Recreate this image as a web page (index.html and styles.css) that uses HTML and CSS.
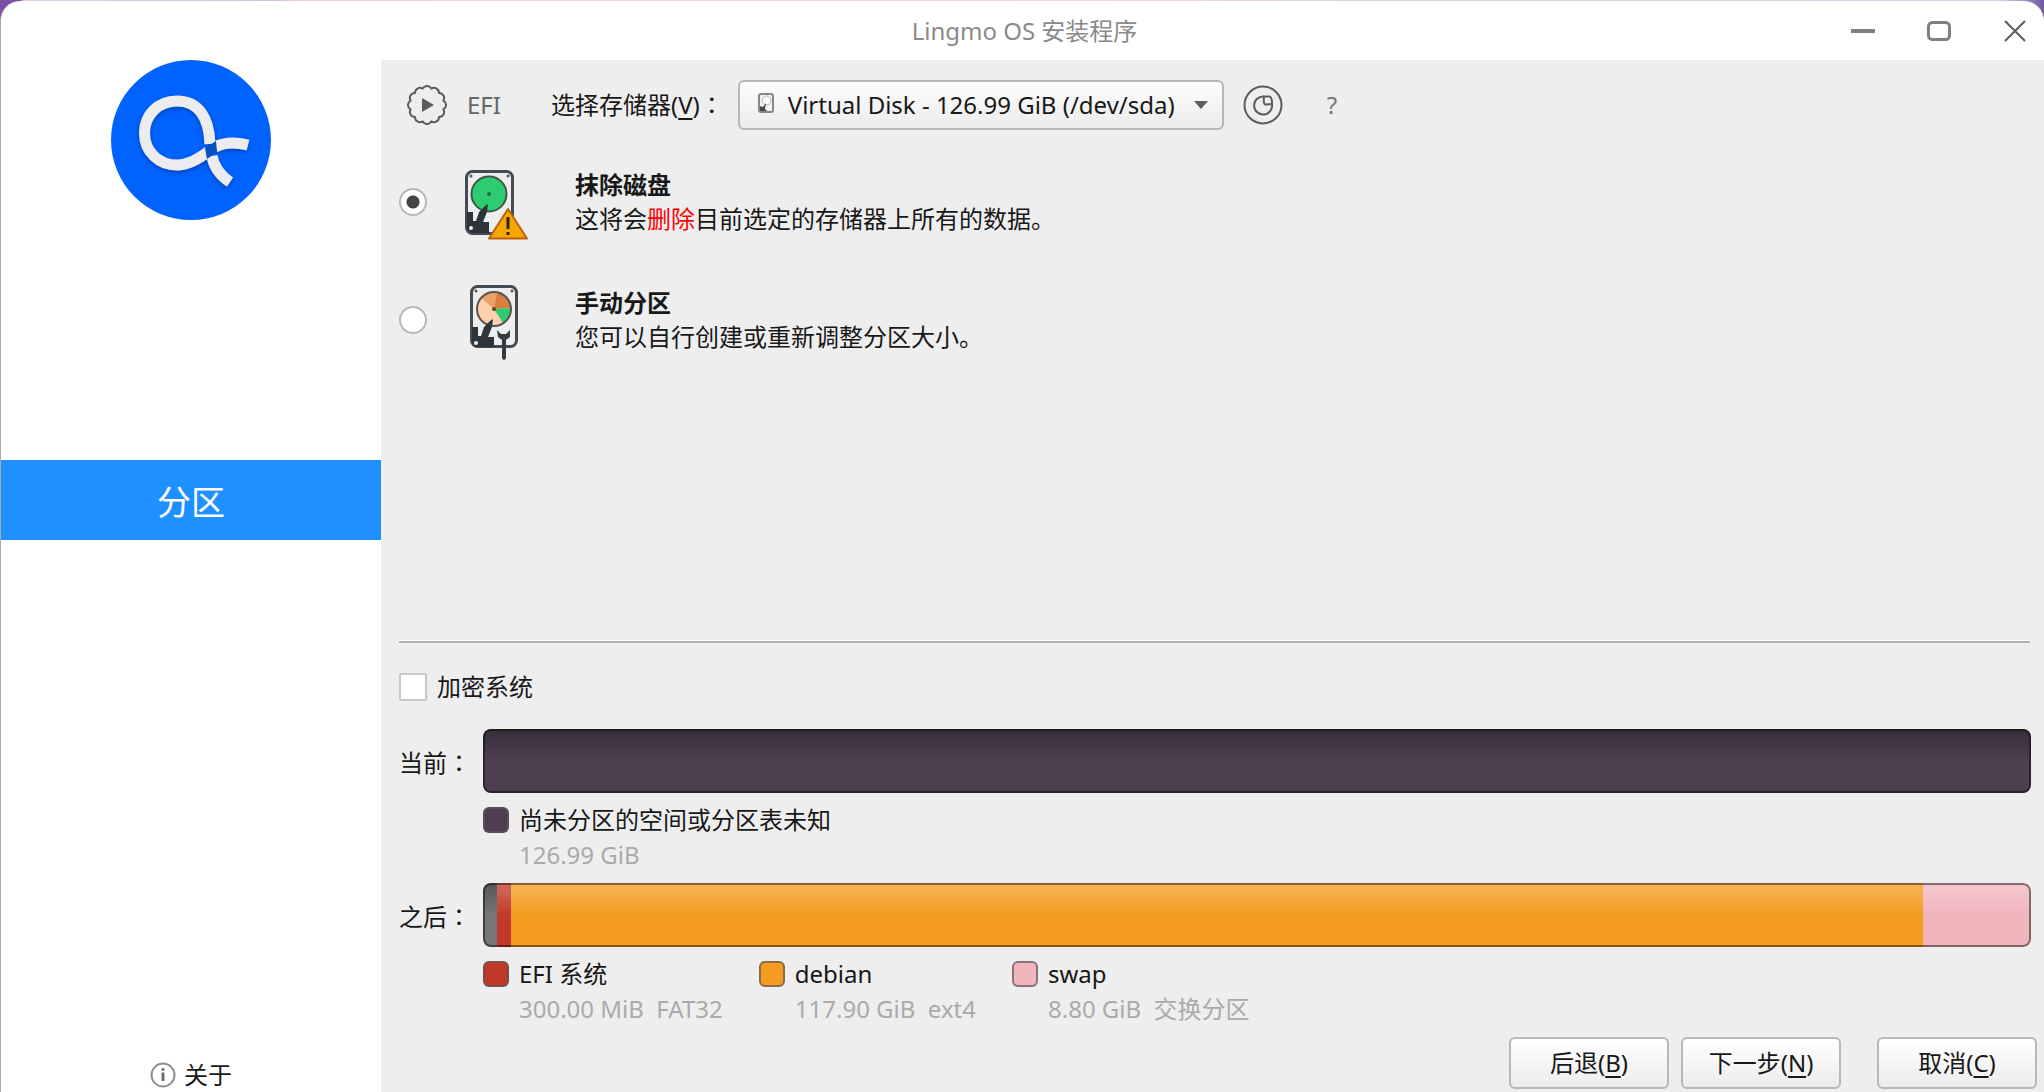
FILE: index.html
```html
<!DOCTYPE html>
<html lang="zh-CN">
<head>
<meta charset="utf-8">
<meta name="viewport" content="width=device-width, initial-scale=1">
<title>Lingmo OS 安装程序</title>
<link rel="stylesheet" href="styles.css">
</head>
<body>
<div class="window">
  <header class="titlebar">
    <h1 class="title">Lingmo OS 安装程序</h1>
    <div class="window-controls">
      <button class="window-button" type="button" aria-label="最小化"><svg width="24" height="24" viewBox="0 0 24 24"><path d="M0 12H24" fill="none" stroke="#808080" stroke-width="4"/></svg></button>
      <button class="window-button" type="button" aria-label="最大化"><svg width="24" height="24" viewBox="0 0 24 24"><rect x="1.500" y="3.500" width="21" height="17" rx="4" fill="none" stroke="#808080" stroke-width="3"/></svg></button>
      <button class="window-button" type="button" aria-label="关闭"><svg width="24" height="24" viewBox="0 0 24 24"><path d="M2 2L22 22M22 2L2 22" fill="none" stroke="#5c5c5c" stroke-width="2"/></svg></button>
    </div>
  </header>
  <div class="body">
    <aside class="sidebar">
      <svg class="logo" viewBox="0 0 160 160" role="img" aria-label="Lingmo OS">
        <defs>
          <filter id="soft" x="-20%" y="-20%" width="140%" height="140%"><feDropShadow dx="0" dy="2" stdDeviation="2" flood-color="#002a80" flood-opacity=".6"/></filter>
        </defs>
        <circle cx="80" cy="80" r="80" fill="#0062ff"/>
        <g fill="none" stroke="#ececee" stroke-width="11" filter="url(#soft)">
          <path d="M99 84C98 58 88 41 66 41C47 41 33.500 55 33.500 73C33.500 92 48 105 66 105C78 105 86 99 97 92"/>
          <path d="M104 87C114 82 125 82 137 85"/>
          <path d="M101 96C103 108 110 116 119 122"/>
        </g>
        <path d="M94 88L105 81L106 92L96 99Z" fill="#0a4fc4"/>
      </svg>
      <div class="step">分区</div>
      <button class="about" type="button">
        <svg width="26" height="26" viewBox="0 0 26 26"><circle cx="13" cy="13" r="11.500" fill="none" stroke="#909090" stroke-width="2"/><path d="M13 10.500V19" stroke="#707070" stroke-width="3"/><circle cx="13" cy="7.500" r="1.700" fill="#808080"/></svg>
        关于
      </button>
    </aside>
    <main class="content">
      <div class="toolbar">
        <svg width="40" height="40" viewBox="0 0 40 40"><path fill="none" stroke="#5c5c5c" stroke-width="2" stroke-linejoin="round" d="M36.400 15.600A5 5 0 0 1 36.400 24.400A5 5 0 0 1 32 32A5 5 0 0 1 24.400 36.400A5 5 0 0 1 15.600 36.400A5 5 0 0 1 8 32A5 5 0 0 1 3.600 24.400A5 5 0 0 1 3.600 15.600A5 5 0 0 1 8 8A5 5 0 0 1 15.600 3.600A5 5 0 0 1 24.400 3.600A5 5 0 0 1 32 8A5 5 0 0 1 36.400 15.600Z"/><path d="M15 13L27 20L15 27Z" fill="#5c5c5c"/></svg>
        <span class="firmware">EFI</span>
        <label class="device-label" for="device">选择存储器(<u>V</u>)<span lang="ja">：</span></label>
        <div class="device">
          <select id="device" class="device-select"><option>Virtual Disk - 126.99 GiB (/dev/sda)</option></select>
          <svg class="device-icon" width="16" height="20" viewBox="0 0 16 20"><rect x="1" y="1" width="14" height="18" rx="2" fill="#f4f4f4" stroke="#88888c" stroke-width="2"/><circle cx="8.500" cy="7.500" r="4.500" fill="#fafafa" stroke="#b0b0b4"/><path d="M2 13L5 14L8 10L7 16L9 18H2Z" fill="#4a4a50"/></svg>
          <svg class="device-arrow" width="14" height="8" viewBox="0 0 14 8"><path d="M0 0H14L7 8Z" fill="#5c5c5c"/></svg>
        </div>
        <button class="icon-button" type="button" aria-label="分区工具"><svg width="40" height="40" viewBox="0 0 40 40"><g fill="none" stroke="#5c5c5c" stroke-width="2"><circle cx="20" cy="20" r="18.500"/><path d="M21 11.500A9 9 0 1 0 29 19"/><path d="M21 11.500Q20 20 23 19.500T29 19Q29 12 26.500 11.500Z"/></g></svg></button>
        <button class="help" type="button">?</button>
      </div>

      <div class="choices">
        <div class="choice">
          <input class="radio" type="radio" name="mode" id="erase" checked>
          <svg class="disk" width="80" height="80" viewBox="0 0 80 80"><rect x="9.500" y="9.500" width="46" height="62" rx="6" fill="#eeeeef" stroke="#454b52" stroke-width="3"/><g fill="#50565c"><circle cx="14" cy="14" r="1.500"/><circle cx="51" cy="14" r="1.500"/></g><circle cx="32" cy="32" r="17.500" fill="#2ecc71" stroke="#42564c" stroke-width="2"/><circle cx="32" cy="32" r="2" fill="#256b43"/><path d="M10 50H16V59H19L22 50L28 44L31 42L30 50L26 60H32V64H32V71H14L10 67Z" fill="#2d353b"/><circle cx="14" cy="66" r="2" fill="#eee"/><path d="M51 47L70 76.500H32Z" fill="#f5a800" stroke="#c06010" stroke-width="2" stroke-linejoin="round"/><path d="M51 55V67M51 70V73" stroke="#302408" stroke-width="3"/></svg>
          <label class="choice-text" for="erase"><strong>抹除磁盘</strong><span>这将会<em>删除</em>目前选定的存储器上所有的数据。</span></label>
        </div>
        <div class="choice">
          <input class="radio" type="radio" name="mode" id="manual">
          <svg class="disk" width="80" height="80" viewBox="0 0 80 80"><rect x="14.500" y="6.500" width="45" height="60" rx="6" fill="#eeeeef" stroke="#454b52" stroke-width="3"/><g fill="#50565c"><circle cx="19" cy="11" r="1.500"/><circle cx="55" cy="11" r="1.500"/></g><circle cx="37" cy="29" r="17" fill="#ffd0ae"/><path d="M37 29L24 18A17 17 0 0 1 40 12Z" fill="#e8a26a"/><path d="M37 29L40 12A17 17 0 0 1 54 28Z" fill="#d97f3e"/><path d="M37 29L54 28A17 17 0 0 1 46 43Z" fill="#2ecc71"/><circle cx="37" cy="29" r="17" fill="none" stroke="#5b5450" stroke-width="2"/><circle cx="37" cy="29" r="2" fill="#604030"/><path d="M15 47H21V56H24L27 47L33 41L36 39L35 47L31 57H37V67H19L15 63Z" fill="#2d353b"/><circle cx="19" cy="63" r="2" fill="#eee"/><path d="M40 50L41 57L45 60V78Q47 82 49 78V60L53 57V50L49 54H44Z" fill="#343c42"/></svg>
          <label class="choice-text" for="manual"><strong>手动分区</strong><span>您可以自行创建或重新调整分区大小。</span></label>
        </div>
      </div>

      <hr class="divider">

      <div class="encrypt">
        <input class="checkbox" type="checkbox" id="encrypt">
        <label for="encrypt">加密系统</label>
      </div>

      <div class="layouts">
        <div class="caption">当前<span lang="ja">：</span></div>
        <div class="bar"><div class="part unknown" style="width:100%"></div></div>
        <div class="legend">
          <div class="entry"><i class="swatch unknown"></i><span>尚未分区的空间或分区表未知</span><small>126.99 GiB</small></div>
        </div>
        <div class="caption">之后<span lang="ja">：</span></div>
        <div class="bar">
          <div class="part reserved"></div><div class="part efi"></div><div class="part root"></div><div class="part swap" style="width:7%"></div>
        </div>
        <div class="legend">
          <div class="entry"><i class="swatch efi"></i><span>EFI 系统</span><small>300.00 MiB&nbsp; FAT32</small></div>
          <div class="entry"><i class="swatch root"></i><span>debian</span><small>117.90 GiB&nbsp; ext4</small></div>
          <div class="entry"><i class="swatch swap"></i><span>swap</span><small>8.80 GiB&nbsp; 交换分区</small></div>
        </div>
      </div>

      <div class="actions">
        <button class="push" type="button">后退(<u>B</u>)</button>
        <button class="push" type="button">下一步(<u>N</u>)</button>
        <button class="push cancel" type="button">取消(<u>C</u>)</button>
      </div>
    </main>
  </div>
</div>
</body>
</html>
```
FILE: styles.css
```css
* { box-sizing: border-box; }

body {
  margin: 0;
  background: linear-gradient(90deg, #7b4fa3 0, #7b4fa3 20px, #ddd0e6 24px, #d3c0da 280px, #f3cde4 300px, #f0d8d8 1100px, #dcd0e0 1400px, #d8d0e4 2000px, #7059a0 100%);
  color: #181818;
  font: 24px/34px "Noto Sans", "Noto Sans CJK JP", sans-serif;
}

button, select, input { font: inherit; color: inherit; margin: 0; }
button { padding: 0; border: 0; background: none; }
svg { display: block; flex: none; }
u { text-decoration-thickness: 2px; text-underline-offset: 4px; }

.window {
  display: flex;
  flex-direction: column;
  min-height: calc(100vh - 1px);
  margin-top: 1px;
  border-left: 1px solid #aaa;
  border-radius: 20px 20px 0 0;
  background: #fff;
  overflow: hidden;
}

.titlebar {
  display: grid;
  grid-template-columns: 1fr auto 1fr;
  align-items: center;
  height: 59px;
}
.title { grid-column: 2; margin: 0; padding-left: 4px; font-size: 24px; font-weight: 400; color: #8a8a8a; }
.window-controls { display: flex; justify-content: flex-end; gap: 52px; padding-right: 17px; }

.body { display: flex; flex: 1; }

.sidebar {
  display: flex;
  flex-direction: column;
  align-items: center;
  flex: none;
  width: 380px;
}
.logo { width: 160px; height: 160px; }
.step {
  width: 100%;
  margin-top: 240px;
  padding-top: 4px;
  background: #1e90ff;
  color: #fff;
  font-size: 34px;
  line-height: 76px;
  text-align: center;
}
.about { display: flex; align-items: center; gap: 8px; margin-top: auto; }

.content {
  display: flex;
  flex-direction: column;
  flex: 1;
  background: #eee;
}

.toolbar { display: flex; align-items: center; padding: 20px 26px; height: 90px; }
.firmware { margin-left: 20px; color: #666; }
.device-label { margin-left: 50px; }
.device { position: relative; width: 486px; margin-left: 14px; }
.device-select {
  width: 100%;
  height: 50px;
  padding: 0 48px;
  appearance: none;
  border: 2px solid #b8b8b8;
  border-radius: 6px;
  background: linear-gradient(#fdfdfd, #ececec);
}
.device-icon { position: absolute; left: 20px; top: 13px; }
.device-arrow { position: absolute; right: 16px; top: 21px; }
.icon-button { margin-left: 19px; }
.help { margin-left: 44px; color: #777; }

.choices { flex: 1; padding-left: 18px; }
.choice { display: flex; align-items: center; height: 118px; }
.choice:first-child { margin-top: -7px; }
.disk { margin: 0 38px 0 30px; }
.choice-text { display: flex; flex-direction: column; }
.choice-text em { color: #f00; font-style: normal; }

.radio, .checkbox {
  flex: none;
  width: 28px;
  height: 28px;
  appearance: none;
  border: 2px solid #b8b8b8;
  background: #fff;
}
.radio { border-radius: 50%; }
.radio:checked { background: radial-gradient(circle, #444 6px, #fff 7px); }
.checkbox { border-color: #c8c8c8; border-radius: 2px; }

.divider { width: auto; height: 3px; margin: 0 14px 0 18px; border: 0; border-top: 1px solid #fff; background: #b0b0b0; }

.encrypt { display: flex; align-items: center; gap: 10px; margin: 27px 18px 25px; }

.layouts {
  display: grid;
  grid-template-columns: 84px 1fr;
  align-items: center;
  margin: 0 13px 0 18px;
}
.caption { padding-top: 3px; }
.bar {
  display: flex;
  height: 64px;
  border-radius: 8px;
  overflow: hidden;
  position: relative;
}
.bar::after {
  content: "";
  position: absolute;
  inset: 0;
  border: 2px solid rgba(0, 0, 0, .45);
  border-radius: 8px;
}
.part { background-image: linear-gradient(rgba(255, 255, 255, .22) 10%, rgba(255, 255, 255, 0) 50%); }
.unknown { background-color: #4d3f50; }
.reserved { width: 14px; background-color: #777; }
.efi { background-color: #c0392b; }
.root { background-color: #f39c1f; }
.swap { background-color: #f1b5bc; }
.part.efi { width: 14px; }
.part.root { flex: 1; }
.part.unknown, .part.reserved { background-image: linear-gradient(rgba(0, 0, 0, .28), rgba(0, 0, 0, 0) 50%); }

.legend { grid-column: 2; display: flex; gap: 36px; height: 90px; padding-top: 10px; }
.entry { display: grid; grid-template-columns: 26px auto; column-gap: 10px; align-content: start; }
.swatch { width: 26px; height: 26px; border: 2px solid rgba(90, 90, 90, .7); border-radius: 6px; align-self: center; }
.entry small { grid-column: 2; padding-top: 1px; font-size: 24px; color: #aaaaac; }

.actions { display: flex; justify-content: flex-end; gap: 12px; padding: 0 7px 3px; }
.push {
  width: 160px;
  height: 52px;
  border: 2px solid #b8b8b8;
  border-radius: 6px;
  background: linear-gradient(#fff, #ececec);
}
.cancel { margin-left: 24px; }
```
